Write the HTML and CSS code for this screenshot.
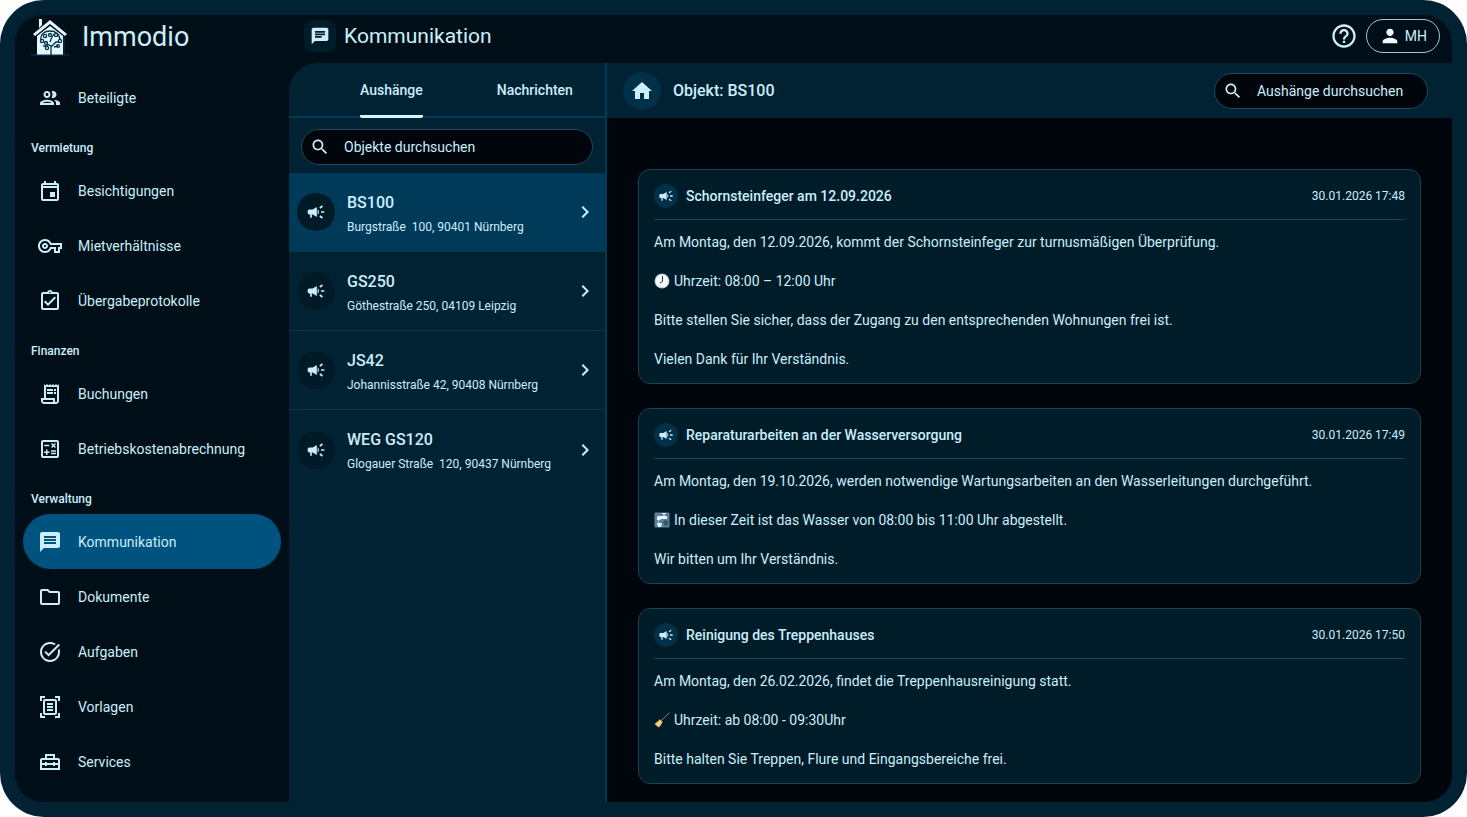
FILE: index.html
```html
<!DOCTYPE html>
<html lang="de">

<head>
    <meta charset="UTF-8">
    <meta name="viewport" content="width=device-width, initial-scale=1.0">
    <title>Immodio - Kommunikation</title>
    <link rel="stylesheet" href="styles.css">
</head>

<body>
    <!-- shared icons -->
    <svg class="sprite" aria-hidden="true">
        <symbol id="i-campaign" viewBox="0 0 24 24">
            <path d="M18 11v2h4v-2h-4zM16 17.61c.96.71 2.21 1.65 3.2 2.39.4-.53.8-1.07 1.2-1.6-.99-.74-2.24-1.68-3.2-2.4-.4.54-.8 1.08-1.2 1.61zM20.4 5.6c-.4-.53-.8-1.07-1.2-1.6-.99.74-2.24 1.68-3.2 2.4.4.53.8 1.07 1.2 1.6.96-.72 2.21-1.65 3.2-2.4zM4 9c-1.1 0-2 .9-2 2v2c0 1.1.9 2 2 2h1v4h2v-4h1l5 3V6L8 9H4zm11.5 3c0-1.33-.58-2.53-1.5-3.35v6.69c.92-.81 1.5-2.01 1.5-3.34z"/>
        </symbol>
        <symbol id="i-search" viewBox="0 0 24 24">
            <path d="M15.5 14h-.79l-.28-.27C15.41 12.59 16 11.11 16 9.5 16 5.91 13.09 3 9.5 3S3 5.91 3 9.5 5.91 16 9.5 16c1.61 0 3.09-.59 4.23-1.57l.27.28v.79l5 4.99L20.49 19l-4.99-5zm-6 0C7.01 14 5 11.99 5 9.5S7.01 5 9.5 5 14 7.01 14 9.5 11.99 14 9.5 14z"/>
        </symbol>
        <symbol id="i-chevron" viewBox="0 0 24 24">
            <path d="M10 6L8.59 7.41 13.17 12l-4.58 4.59L10 18l6-6z"/>
        </symbol>
    </svg>

    <div class="frame">
        <div class="app">
            <aside class="sidebar">
                <div class="brand">
                    <svg class="logo" viewBox="0 0 40 40">
                        <path fill="#e6f8ff" d="M9 2h3v6l-3 3zM20 3L3 17l2 2 15-12 15 12 2-2z"/>
                        <path fill="#e6f8ff" d="M20 9L7 19v19h26V19z"/>
                        <path fill="none" stroke="#003a5c" stroke-width="1" d="M1 38h38M34 20v17"/>
                        <g fill="none" stroke="#00304b" stroke-width="1.3">
                            <path d="M21 38v-9l-4-2M21 30l5-5 3 0M20 25l2-5 2-3M13 29h5M11 23c-1-6 4-9 9-9s10 3 10 9M24 30l4-1"/>
                            <circle cx="15" cy="19" r="1.6"/>
                            <circle cx="20" cy="18" r="1.5"/>
                            <circle cx="26" cy="18" r="1.6"/>
                            <circle cx="12" cy="24" r="1.6"/>
                            <circle cx="16" cy="26" r="1.5"/>
                            <circle cx="30" cy="24" r="1.6"/>
                            <circle cx="17" cy="31" r="1.6"/>
                            <circle cx="28" cy="29" r="1.4"/>
                        </g>
                    </svg>
                    <span>Immodio</span>
                </div>

                <nav class="nav">
                    <a href="#" class="nav-item">
                        <svg viewBox="0 0 24 24"><path d="M9 13.75c-2.34 0-7 1.17-7 3.5V19h14v-1.75c0-2.33-4.66-3.5-7-3.5zM4.34 17c.84-.58 2.87-1.25 4.66-1.25s3.82.67 4.66 1.25H4.34zM9 12c1.93 0 3.5-1.57 3.5-3.5S10.93 5 9 5 5.5 6.57 5.5 8.5 7.07 12 9 12zm0-5c.83 0 1.5.67 1.5 1.5S9.83 10 9 10s-1.5-.67-1.5-1.5S8.17 7 9 7zm7.04 6.81c1.16.84 1.96 1.96 1.96 3.44V19h4v-1.75c0-2.02-3.5-3.17-5.96-3.44zM15 12c1.93 0 3.5-1.57 3.5-3.5S16.93 5 15 5c-.54 0-1.04.13-1.5.35.63.89 1 1.98 1 3.15s-.37 2.26-1 3.15c.46.22.96.35 1.5.35z"/></svg>
                        Beteiligte
                    </a>

                    <h2 class="nav-title">Vermietung</h2>
                    <a href="#" class="nav-item">
                        <svg viewBox="0 0 24 24"><path d="M19 4h-1V2h-2v2H8V2H6v2H5c-1.1 0-2 .9-2 2v14c0 1.1.9 2 2 2h14c1.1 0 2-.9 2-2V6c0-1.1-.9-2-2-2zm0 16H5V9h14v11zm0-13H5V6h14v1zm-7 6h5v5h-5z"/></svg>
                        Besichtigungen
                    </a>
                    <a href="#" class="nav-item">
                        <svg viewBox="0 0 24 24"><path d="M22 19h-6v-4h-2.68c-1.14 2.42-3.6 4-6.32 4-3.86 0-7-3.14-7-7s3.14-7 7-7c2.72 0 5.17 1.58 6.32 4H24v6h-2v4zm-4-2h2v-4h2v-2H11.94l-.23-.67C11.01 8.34 9.11 7 7 7c-2.76 0-5 2.24-5 5s2.24 5 5 5c2.11 0 4.01-1.34 4.71-3.33l.23-.67H18v4zM7 15c-1.65 0-3-1.35-3-3s1.35-3 3-3 3 1.35 3 3-1.35 3-3 3zm0-4c-.55 0-1 .45-1 1s.45 1 1 1 1-.45 1-1-.45-1-1-1z"/></svg>
                        Mietverhältnisse
                    </a>
                    <a href="#" class="nav-item">
                        <svg viewBox="0 0 24 24"><path d="M19 3h-4.18C14.4 1.84 13.3 1 12 1s-2.4.84-2.82 2H5c-1.1 0-2 .9-2 2v14c0 1.1.9 2 2 2h14c1.1 0 2-.9 2-2V5c0-1.1-.9-2-2-2zm-7-.25c.41 0 .75.34.75.75s-.34.75-.75.75-.75-.34-.75-.75.34-.75.75-.75zM19 19H5V5h14v14zM17.99 9l-1.41-1.42-6.59 6.59-2.58-2.57-1.42 1.41 4 3.99z"/></svg>
                        Übergabeprotokolle
                    </a>

                    <h2 class="nav-title">Finanzen</h2>
                    <a href="#" class="nav-item">
                        <svg viewBox="0 0 24 24"><path d="M19.5 3.5L18 2l-1.5 1.5L15 2l-1.5 1.5L12 2l-1.5 1.5L9 2 7.5 3.5 6 2v14H3v3c0 1.66 1.34 3 3 3h12c1.66 0 3-1.34 3-3V2l-1.5 1.5zM15 20H6c-.55 0-1-.45-1-1v-1h10v2zm4-1c0 .55-.45 1-1 1s-1-.45-1-1v-3H8V5h11v14zM9 7h6v2H9zM16 7h2v2h-2zM9 10h6v2H9zM16 10h2v2h-2z"/></svg>
                        Buchungen
                    </a>
                    <a href="#" class="nav-item">
                        <svg viewBox="0 0 24 24"><path d="M19 3H5c-1.1 0-2 .9-2 2v14c0 1.1.9 2 2 2h14c1.1 0 2-.9 2-2V5c0-1.1-.9-2-2-2zm0 16H5V5h14v14zM6.25 7.72h5v1.5h-5zM13 15.75h5v1.5h-5zM13 13.25h5v1.5h-5zM8 18h1.5v-2h2v-1.5h-2v-2H8v2H6V16h2zM14.09 10.95l1.41-1.41 1.41 1.41 1.06-1.06-1.41-1.42 1.41-1.41L16.91 6 15.5 7.41 14.09 6l-1.06 1.06 1.41 1.41-1.41 1.42z"/></svg>
                        Betriebskostenabrechnung
                    </a>

                    <h2 class="nav-title">Verwaltung</h2>
                    <a href="#" class="nav-item active">
                        <svg viewBox="0 0 24 24"><path d="M20 2H4c-1.1 0-2 .9-2 2v18l4-4h14c1.1 0 2-.9 2-2V4c0-1.1-.9-2-2-2zm-2 12H6v-2h12v2zm0-3H6V9h12v2zm0-3H6V6h12v2z"/></svg>
                        Kommunikation
                    </a>
                    <a href="#" class="nav-item">
                        <svg viewBox="0 0 24 24"><path d="M9.17 6l2 2H20v10H4V6h5.17M10 4H4c-1.1 0-2 .9-2 2v12c0 1.1.9 2 2 2h16c1.1 0 2-.9 2-2V8c0-1.1-.9-2-2-2h-8l-2-2z"/></svg>
                        Dokumente
                    </a>
                    <a href="#" class="nav-item">
                        <svg viewBox="0 0 24 24"><path d="M22 5.18L10.59 16.6l-4.24-4.24 1.41-1.41 2.83 2.83 10-10L22 5.18zM19.79 10.22c.13.57.21 1.17.21 1.78 0 4.42-3.58 8-8 8s-8-3.58-8-8 3.58-8 8-8c1.58 0 3.04.46 4.28 1.25l1.44-1.44C16.1 2.67 14.13 2 12 2 6.48 2 2 6.48 2 12s4.48 10 10 10 10-4.48 10-10c0-1.19-.22-2.33-.6-3.39l-1.61 1.61z"/></svg>
                        Aufgaben
                    </a>
                    <a href="#" class="nav-item">
                        <svg class="line" viewBox="0 0 24 24"><path d="M3 6V2h4M17 2h4v4M21 18v4h-4M7 22H3v-4"/><rect x="6" y="5" width="12" height="14" rx="1"/><path d="M9 9h6M9 12h6M9 15h6"/></svg>
                        Vorlagen
                    </a>
                    <a href="#" class="nav-item">
                        <svg class="line" viewBox="0 0 24 24"><path d="M3 19V10a1 1 0 0 1 1-1h16a1 1 0 0 1 1 1v9zM8 9V5h8v4M3 14h18M8 12v4M16 12v4"/></svg>
                        Services
                    </a>
                </nav>
            </aside>

            <div class="main">
                <header class="topbar">
                    <span class="page-icon">
                        <svg viewBox="0 0 24 24"><path d="M20 2H4c-1.1 0-2 .9-2 2v18l4-4h14c1.1 0 2-.9 2-2V4c0-1.1-.9-2-2-2zM6 9h12v2H6V9zm8 5H6v-2h8v2zm4-6H6V6h12v2z"/></svg>
                    </span>
                    <h1>Kommunikation</h1>
                    <button type="button" class="help" aria-label="Hilfe">
                        <svg viewBox="0 0 24 24"><path d="M11 18h2v-2h-2v2zm1-16C6.48 2 2 6.48 2 12s4.48 10 10 10 10-4.48 10-10S17.52 2 12 2zm0 18c-4.41 0-8-3.59-8-8s3.59-8 8-8 8 3.59 8 8-3.59 8-8 8zm0-14c-2.21 0-4 1.79-4 4h2c0-1.1.9-2 2-2s2 .9 2 2c0 2-3 1.75-3 5h2c0-2.25 3-2.5 3-5 0-2.21-1.79-4-4-4z"/></svg>
                    </button>
                    <button type="button" class="user">
                        <svg viewBox="0 0 24 24"><path d="M12 12c2.21 0 4-1.79 4-4s-1.79-4-4-4-4 1.79-4 4 1.79 4 4 4zm0 2c-2.67 0-8 1.34-8 4v2h16v-2c0-2.66-5.33-4-8-4z"/></svg>
                        MH
                    </button>
                </header>

                <div class="workspace">
                    <section class="objects">
                        <div class="tabs">
                            <button type="button" class="tab active">Aushänge</button>
                            <button type="button" class="tab">Nachrichten</button>
                        </div>
                        <div class="object-search">
                            <label class="search">
                                <svg><use href="#i-search"/></svg>
                                <input type="text" placeholder="Objekte durchsuchen" aria-label="Objekte durchsuchen">
                            </label>
                        </div>
                        <a href="#" class="object active">
                            <span class="object-icon"><svg><use href="#i-campaign"/></svg></span>
                            <span class="object-text">
                                <strong>BS100</strong>
                                <span class="address">Burgstraße  100, 90401 Nürnberg</span>
                            </span>
                            <svg class="chevron"><use href="#i-chevron"/></svg>
                        </a>
                        <a href="#" class="object">
                            <span class="object-icon"><svg><use href="#i-campaign"/></svg></span>
                            <span class="object-text">
                                <strong>GS250</strong>
                                <span class="address">Göthestraße 250, 04109 Leipzig</span>
                            </span>
                            <svg class="chevron"><use href="#i-chevron"/></svg>
                        </a>
                        <a href="#" class="object">
                            <span class="object-icon"><svg><use href="#i-campaign"/></svg></span>
                            <span class="object-text">
                                <strong>JS42</strong>
                                <span class="address">Johannisstraße 42, 90408 Nürnberg</span>
                            </span>
                            <svg class="chevron"><use href="#i-chevron"/></svg>
                        </a>
                        <a href="#" class="object">
                            <span class="object-icon"><svg><use href="#i-campaign"/></svg></span>
                            <span class="object-text">
                                <strong>WEG GS120</strong>
                                <span class="address">Glogauer Straße  120, 90437 Nürnberg</span>
                            </span>
                            <svg class="chevron"><use href="#i-chevron"/></svg>
                        </a>
                    </section>

                    <section class="notices">
                        <div class="notices-bar">
                            <span class="home-icon">
                                <svg viewBox="0 0 24 24"><path d="M10 20v-6h4v6h5v-8h3L12 3 2 12h3v8z"/></svg>
                            </span>
                            <h2>Objekt: BS100</h2>
                            <label class="search">
                                <svg><use href="#i-search"/></svg>
                                <input type="text" placeholder="Aushänge durchsuchen" aria-label="Aushänge durchsuchen">
                            </label>
                        </div>

                        <div class="notice-list">
                            <article class="notice">
                                <header>
                                    <span class="notice-icon"><svg><use href="#i-campaign"/></svg></span>
                                    <h3>Schornsteinfeger am 12.09.2026</h3>
                                    <time>30.01.2026 17:48</time>
                                </header>
                                <div class="notice-body">
                                    <p>Am Montag, den 12.09.2026, kommt der Schornsteinfeger zur turnusmäßigen Überprüfung.</p>
                                    <p>
                                        <svg class="emoji" viewBox="0 0 16 16"><circle cx="8" cy="8" r="7.5" fill="#a9bcc6"/><circle cx="8" cy="8" r="6.6" fill="#f4fbff"/><path d="M8.500 3v5.500L6 10" fill="none" stroke="#1c3340" stroke-width="1"/></svg>
                                        Uhrzeit: 08:00 – 12:00 Uhr
                                    </p>
                                    <p>Bitte stellen Sie sicher, dass der Zugang zu den entsprechenden Wohnungen frei ist.</p>
                                    <p>Vielen Dank für Ihr Verständnis.</p>
                                </div>
                            </article>

                            <article class="notice">
                                <header>
                                    <span class="notice-icon"><svg><use href="#i-campaign"/></svg></span>
                                    <h3>Reparaturarbeiten an der Wasserversorgung</h3>
                                    <time>30.01.2026 17:49</time>
                                </header>
                                <div class="notice-body">
                                    <p>Am Montag, den 19.10.2026, werden notwendige Wartungsarbeiten an den Wasserleitungen durchgeführt.</p>
                                    <p>
                                        <svg class="emoji" viewBox="0 0 16 16"><rect x="0.5" y="0.5" width="15" height="15" rx="1" fill="#5d8298"/><path d="M3 8V6c0-1.500 1-2 2-2h8v3H7L6 8zM8 1h4v1H8zM9.500 2h1v2h-1z" fill="#e6f6ff"/><path d="M3 11h5l-1 4H4z" fill="#e6f6ff"/><path d="M4 8.500h1v2H4z" fill="#a8dcf5"/><path d="M9 10l2-2 3 1v4l-3 1z" fill="#2b5872"/></svg>
                                        In dieser Zeit ist das Wasser von 08:00 bis 11:00 Uhr abgestellt.
                                    </p>
                                    <p>Wir bitten um Ihr Verständnis.</p>
                                </div>
                            </article>

                            <article class="notice">
                                <header>
                                    <span class="notice-icon"><svg><use href="#i-campaign"/></svg></span>
                                    <h3>Reinigung des Treppenhauses</h3>
                                    <time>30.01.2026 17:50</time>
                                </header>
                                <div class="notice-body">
                                    <p>Am Montag, den 26.02.2026, findet die Treppenhausreinigung statt.</p>
                                    <p>
                                        <svg class="emoji" viewBox="0 0 16 16"><path d="M15.500 0.500L7 9" stroke="#6f7f86" stroke-width="1"/><path d="M6 7.500L8.500 10 7 13 4.500 15.500 3 14 0.500 12z" fill="#f7cf6b"/><path d="M6 7.500L8.500 10" stroke="#c8793a" stroke-width="1"/></svg>
                                        Uhrzeit: ab 08:00 - 09:30Uhr
                                    </p>
                                    <p>Bitte halten Sie Treppen, Flure und Eingangsbereiche frei.</p>
                                </div>
                            </article>
                        </div>
                    </section>
                </div>
            </div>
        </div>
    </div>
</body>

</html>
```
FILE: styles.css
```css
* {
    box-sizing: border-box;
}

body {
    margin: 0;
    background-color: #fdfdfd;
    font-family: Roboto, "Liberation Sans", sans-serif;
    font-size: 14px;
    line-height: 20px;
    color: #cbeefc;
}

h1, h2, h3, p {
    margin: 0;
}

a {
    color: inherit;
    text-decoration: none;
}

button {
    font: inherit;
    color: inherit;
    background: none;
    border: none;
    padding: 0;
    cursor: pointer;
}

svg {
    width: 24px;
    height: 24px;
    flex-shrink: 0;
    fill: currentColor;
}

.sprite {
    display: none;
}

.line {
    fill: none;
    stroke: currentColor;
    stroke-width: 2;
}

.frame {
    display: flex;
    min-height: 100vh;
    padding: 15px;
    background-color: #002233;
    border-radius: 44px;
}

.app {
    display: flex;
    flex: 1;
    border-radius: 28px;
    overflow: hidden;
    background-color: #000f17;
}

/* sidebar */
.sidebar {
    width: 274px;
    flex-shrink: 0;
}

.brand {
    display: flex;
    align-items: center;
    gap: 12px;
    height: 43px;
    margin-bottom: 12px;
    padding-left: 15px;
    font-size: 27px;
}

.logo {
    width: 40px;
    height: 40px;
}

.nav {
    padding: 0 8px;
}

.nav-item {
    display: flex;
    align-items: center;
    gap: 16px;
    height: 55px;
    padding: 0 15px;
    border-radius: 28px;
}

.nav-item.active {
    background-color: #00527f;
}

.nav-title {
    padding: 15px 8px 7px;
    font-size: 12px;
    line-height: 16px;
    font-weight: 500;
}

/* main column */
.main {
    display: flex;
    flex-direction: column;
    flex: 1;
    min-width: 0;
}

.topbar {
    display: flex;
    align-items: center;
    gap: 8px;
    height: 48px;
    padding: 0 12px 7px 15px;
}

.page-icon {
    display: flex;
    align-items: center;
    justify-content: center;
    width: 32px;
    height: 32px;
    border-radius: 8px;
    background-color: #001c29;
}

.page-icon svg {
    width: 20px;
    height: 20px;
}

.topbar h1 {
    flex: 1;
    font-size: 21px;
    line-height: 28px;
    font-weight: 400;
}

.help {
    display: flex;
}

.help svg {
    width: 28px;
    height: 28px;
}

.user {
    display: flex;
    align-items: center;
    gap: 4px;
    height: 34px;
    padding: 0 12px;
    border: 1px solid #9fc9db;
    border-radius: 17px;
}

.user svg {
    width: 22px;
    height: 22px;
    fill: #f0fbff;
}

.workspace {
    display: flex;
    flex: 1;
    background-color: #00060c;
    border-top-left-radius: 28px;
    overflow: hidden;
}

/* object list */
.objects {
    width: 318px;
    flex-shrink: 0;
    background-color: #002233;
    border-right: 2px solid #003a59;
}

.tabs {
    display: flex;
    gap: 74px;
    height: 55px;
    padding-left: 71px;
    border-bottom: 2px solid #003a59;
}

.tab {
    height: 55px;
    padding-top: 2px;
    border-bottom: 3px solid transparent;
    font-weight: 500;
}

.tab.active {
    border-bottom-color: #d9f4ff;
    border-radius: 2px;
}

.object-search {
    padding: 11px 12px 8px;
}

.search {
    display: flex;
    align-items: center;
    gap: 14px;
    height: 36px;
    padding: 0 12px 0 8px;
    border: 1px solid #24485b;
    border-radius: 18px;
    background-color: #00060c;
}

.search svg {
    width: 20px;
    height: 20px;
}

.search input {
    flex: 1;
    min-width: 0;
    padding: 0;
    border: none;
    outline: none;
    background: none;
    font: inherit;
    color: inherit;
}

.search input::placeholder {
    color: inherit;
    opacity: 1;
}

.object {
    display: flex;
    align-items: center;
    gap: 12px;
    height: 79px;
    padding: 0 8px;
    border-bottom: 1px solid #0d3348;
}

.object:last-child {
    border-bottom: none;
}

.object.active {
    background-color: #003a59;
}

.object-icon {
    display: flex;
    align-items: center;
    justify-content: center;
    width: 38px;
    height: 38px;
    border-radius: 50%;
    background-color: #001a27;
}

.object-icon svg {
    width: 20px;
    height: 20px;
}

.object-text {
    display: flex;
    flex-direction: column;
    gap: 4px;
    flex: 1;
    padding-top: 5px;
}

.object-text strong {
    font-size: 16px;
    font-weight: 500;
}

.address {
    font-size: 12px;
    white-space: pre;
}

/* notices */
.notices {
    flex: 1;
    min-width: 0;
}

.notices-bar {
    display: flex;
    align-items: center;
    gap: 12px;
    height: 55px;
    padding: 0 24px 0 16px;
    background-color: #002233;
}

.notices-bar h2 {
    flex: 1;
    font-size: 16px;
    font-weight: 500;
}

.notices-bar .search {
    width: 214px;
}

.home-icon {
    display: flex;
    align-items: center;
    justify-content: center;
    width: 38px;
    height: 38px;
    border-radius: 50%;
    background-color: #003149;
}

.notice-list {
    display: flex;
    flex-direction: column;
    gap: 24px;
    padding: 51px 31px 16px;
}

.notice {
    padding: 14px 15px;
    border: 1px solid #1d4055;
    border-radius: 12px;
    background-color: #001c29;
}

.notice header {
    display: flex;
    align-items: center;
    gap: 8px;
    padding-bottom: 11px;
    border-bottom: 1px solid #1d4055;
}

.notice-icon {
    display: flex;
    align-items: center;
    justify-content: center;
    width: 24px;
    height: 24px;
    border-radius: 50%;
    background-color: #003149;
}

.notice-icon svg {
    width: 16px;
    height: 16px;
}

.notice h3 {
    flex: 1;
    font-size: 14px;
    font-weight: 500;
}

.notice time {
    font-size: 12px;
}

.notice-body {
    display: flex;
    flex-direction: column;
    gap: 19px;
    padding-top: 12px;
}

.notice-body p {
    display: flex;
    align-items: center;
    gap: 4px;
}

.emoji {
    width: 16px;
    height: 16px;
}
```
